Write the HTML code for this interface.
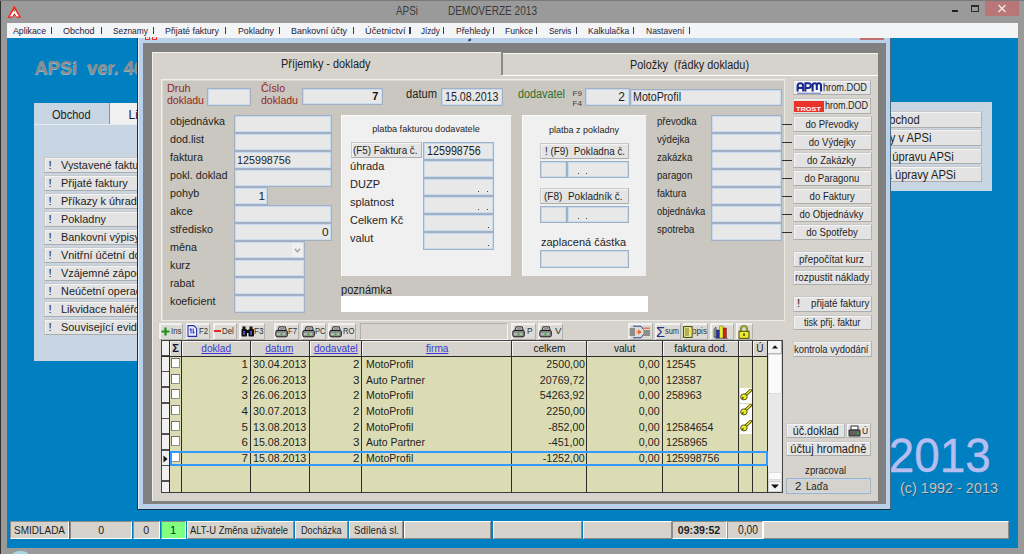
<!DOCTYPE html><html><head><meta charset="utf-8"><style>
*{margin:0;padding:0;box-sizing:border-box}
html,body{width:1024px;height:554px;overflow:hidden;background:#9a9a9a;font-family:"Liberation Sans",sans-serif;color:#1a1a1a}
.a{position:absolute}
.t{position:absolute;white-space:pre;line-height:1}
.inp{border:1px solid #a3b0c2;box-shadow:inset 1px 1px 0 #c4daf2, inset -1px -1px 0 #c8dcf2}
.btn{background:#e3e3e3;border:1px solid #c8c8c8;border-bottom-color:#acacac;border-right-color:#b2b2b2;box-shadow:inset 1px 1px 0 #f4f4f4}
</style></head><body><div class="a" style="left:0px;top:0px;width:1024px;height:554px;background:#9a9a9a"></div>
<div class="a" style="left:0px;top:0px;width:1px;height:554px;background:#303030"></div>
<div class="a" style="left:0px;top:0px;width:1024px;height:1px;background:#7a7a7a"></div>
<div class="a" style="left:7px;top:23px;width:1011px;height:15px;background:#f3f4f6"></div>
<div class="a" style="left:7px;top:38px;width:1011px;height:510px;background:#0080c0"></div>
<svg class="a" style="left:7.8px;top:5.6px" width="13" height="12" viewBox="0 0 13 12"><path d="M6.4 0.2 L12.7 11.4 H9 L6.4 8.8 L3.8 11.4 H0.1 Z" fill="#ff1414" stroke="#ff1414" stroke-width="0.5" stroke-linejoin="round"/><path d="M6.4 2.9 L11 10.5 H8.7 L6.4 7.2 L4.1 10.5 H1.8 Z" fill="#ffffff"/><circle cx="6.4" cy="4.6" r="0.9" fill="#6a8a20"/></svg>
<div class="t" style="left:396.00px;top:5.42px;font-size:12.5px;transform:scaleX(0.7916);transform-origin:left 50%;color:#3a3a3a;">APSi</div>
<div class="t" style="left:448.00px;top:5.42px;font-size:12.5px;transform:scaleX(0.8057);transform-origin:left 50%;color:#3a3a3a;">DEMOVERZE 2013</div>
<div class="a" style="left:952px;top:10px;width:6px;height:2px;background:#1e1e1e"></div>
<div class="a" style="left:971px;top:5px;width:8px;height:7px;border:1px solid #2a2a2a;border-top-width:2px"></div>
<div class="a" style="left:985px;top:1px;width:34px;height:15px;background:#b97676"></div>
<svg class="a" style="left:997px;top:4px" width="10" height="9" viewBox="0 0 10 9"><path d="M1.5 1 L8.5 8 M8.5 1 L1.5 8" stroke="#f2e6e6" stroke-width="1.4"/></svg>
<div class="t" style="left:12.50px;top:25.60px;font-size:9.8px;transform:scaleX(0.8936);transform-origin:left 50%;color:#24223a;">Aplikace</div>
<div class="a" style="left:50.95px;top:27px;width:1.2px;height:7px;background:#3c3a50"></div>
<div class="t" style="left:63.30px;top:25.60px;font-size:9.8px;transform:scaleX(0.9177);transform-origin:left 50%;color:#24223a;">Obchod</div>
<div class="a" style="left:100.5px;top:27px;width:1.2px;height:7px;background:#3c3a50"></div>
<div class="t" style="left:112.80px;top:25.60px;font-size:9.8px;transform:scaleX(0.8543);transform-origin:left 50%;color:#24223a;">Seznamy</div>
<div class="a" style="left:153.1px;top:27px;width:1.2px;height:7px;background:#3c3a50"></div>
<div class="t" style="left:165.20px;top:25.60px;font-size:9.8px;transform:scaleX(0.9013);transform-origin:left 50%;color:#24223a;">Přijaté faktury</div>
<div class="a" style="left:225.2px;top:27px;width:1.2px;height:7px;background:#3c3a50"></div>
<div class="t" style="left:237.50px;top:25.60px;font-size:9.8px;transform:scaleX(0.8905);transform-origin:left 50%;color:#24223a;">Pokladny</div>
<div class="a" style="left:279.09999999999997px;top:27px;width:1.2px;height:7px;background:#3c3a50"></div>
<div class="t" style="left:291.20px;top:25.60px;font-size:9.8px;transform:scaleX(0.9114);transform-origin:left 50%;color:#24223a;">Bankovní účty</div>
<div class="a" style="left:352.5px;top:27px;width:1.2px;height:7px;background:#3c3a50"></div>
<div class="t" style="left:364.50px;top:25.60px;font-size:9.8px;transform:scaleX(0.9413);transform-origin:left 50%;color:#24223a;">Účetnictví</div>
<div class="a" style="left:409.4px;top:27px;width:1.2px;height:7px;background:#3c3a50"></div>
<div class="t" style="left:421.40px;top:25.60px;font-size:9.8px;transform:scaleX(0.8219);transform-origin:left 50%;color:#24223a;">Jízdy</div>
<div class="a" style="left:443.0px;top:27px;width:1.2px;height:7px;background:#3c3a50"></div>
<div class="t" style="left:455.80px;top:25.60px;font-size:9.8px;transform:scaleX(0.8790);transform-origin:left 50%;color:#24223a;">Přehledy</div>
<div class="a" style="left:493.0px;top:27px;width:1.2px;height:7px;background:#3c3a50"></div>
<div class="t" style="left:505.00px;top:25.60px;font-size:9.8px;transform:scaleX(0.8744);transform-origin:left 50%;color:#24223a;">Funkce</div>
<div class="a" style="left:535.95px;top:27px;width:1.2px;height:7px;background:#3c3a50"></div>
<div class="t" style="left:548.60px;top:25.60px;font-size:9.8px;transform:scaleX(0.8153);transform-origin:left 50%;color:#24223a;">Servis</div>
<div class="a" style="left:576.1px;top:27px;width:1.2px;height:7px;background:#3c3a50"></div>
<div class="t" style="left:588.40px;top:25.60px;font-size:9.8px;transform:scaleX(0.8735);transform-origin:left 50%;color:#24223a;">Kalkulačka</div>
<div class="a" style="left:633.0px;top:27px;width:1.2px;height:7px;background:#3c3a50"></div>
<div class="t" style="left:645.50px;top:25.60px;font-size:9.8px;transform:scaleX(0.8669);transform-origin:left 50%;color:#24223a;">Nastavení</div>
<div class="a" style="left:688.9000000000001px;top:27px;width:1.2px;height:7px;background:#3c3a50"></div>
<div class="t" style="left:34.60px;top:59.36px;font-size:18px;transform:scaleX(1.0120);transform-origin:left 50%;color:#8c8c8c;font-weight:bold;text-shadow:-0.6px 0.6px 0 rgba(225,225,225,0.6)">APSi  ver. 40.13</div>
<div class="a" style="left:34px;top:124px;width:110px;height:237px;background:#c8d5e3"></div>
<div class="a" style="left:34px;top:103px;width:76px;height:21px;background:#c8d5e3"></div>
<div class="a" style="left:34px;top:124px;width:110px;height:1px;background:#e4ecf4"></div>
<div class="a" style="left:109px;top:103px;width:1px;height:21px;background:#8a9098"></div>
<div class="a" style="left:110px;top:103px;width:40px;height:21px;background:#f0f0f0"></div>
<div class="t" style="left:51.80px;top:109.14px;font-size:12px;transform:scaleX(0.9160);transform-origin:left 50%;color:#1e1e1e;">Obchod</div>
<div class="t" style="left:128.50px;top:109.14px;font-size:12px;color:#1e1e1e;">Likvidace</div>
<div class="a btn" style="left:44px;top:156.5px;width:110px;height:16px;"></div>
<div class="t" style="left:48.50px;top:159.97px;font-size:11.5px;color:#1e1e1e;">!</div>
<div class="t" style="left:61.00px;top:159.97px;font-size:11.5px;transform:scaleX(0.9500);transform-origin:left 50%;color:#1e1e1e;">Vystavené faktury</div>
<div class="a btn" style="left:44px;top:174.5px;width:110px;height:16px;"></div>
<div class="t" style="left:48.50px;top:177.97px;font-size:11.5px;color:#1e1e1e;">!</div>
<div class="t" style="left:61.00px;top:177.97px;font-size:11.5px;transform:scaleX(0.9500);transform-origin:left 50%;color:#1e1e1e;">Přijaté faktury</div>
<div class="a btn" style="left:44px;top:192.5px;width:110px;height:16px;"></div>
<div class="t" style="left:48.50px;top:195.97px;font-size:11.5px;color:#1e1e1e;">!</div>
<div class="t" style="left:61.00px;top:195.97px;font-size:11.5px;transform:scaleX(0.9500);transform-origin:left 50%;color:#1e1e1e;">Příkazy k úhradě</div>
<div class="a btn" style="left:44px;top:210.5px;width:110px;height:16px;"></div>
<div class="t" style="left:48.50px;top:213.97px;font-size:11.5px;color:#1e1e1e;">!</div>
<div class="t" style="left:61.00px;top:213.97px;font-size:11.5px;transform:scaleX(0.9500);transform-origin:left 50%;color:#1e1e1e;">Pokladny</div>
<div class="a btn" style="left:44px;top:228.5px;width:110px;height:16px;"></div>
<div class="t" style="left:48.50px;top:231.97px;font-size:11.5px;color:#1e1e1e;">!</div>
<div class="t" style="left:61.00px;top:231.97px;font-size:11.5px;transform:scaleX(0.9500);transform-origin:left 50%;color:#1e1e1e;">Bankovní výpisy</div>
<div class="a btn" style="left:44px;top:246.5px;width:110px;height:16px;"></div>
<div class="t" style="left:48.50px;top:249.97px;font-size:11.5px;color:#1e1e1e;">!</div>
<div class="t" style="left:61.00px;top:249.97px;font-size:11.5px;transform:scaleX(0.9500);transform-origin:left 50%;color:#1e1e1e;">Vnitřní účetní doklady</div>
<div class="a btn" style="left:44px;top:264.5px;width:110px;height:16px;"></div>
<div class="t" style="left:48.50px;top:267.97px;font-size:11.5px;color:#1e1e1e;">!</div>
<div class="t" style="left:61.00px;top:267.97px;font-size:11.5px;transform:scaleX(0.9500);transform-origin:left 50%;color:#1e1e1e;">Vzájemné zápočty</div>
<div class="a btn" style="left:44px;top:282.5px;width:110px;height:16px;"></div>
<div class="t" style="left:48.50px;top:285.97px;font-size:11.5px;color:#1e1e1e;">!</div>
<div class="t" style="left:61.00px;top:285.97px;font-size:11.5px;transform:scaleX(0.9500);transform-origin:left 50%;color:#1e1e1e;">Neúčetní operace</div>
<div class="a btn" style="left:44px;top:300.5px;width:110px;height:16px;"></div>
<div class="t" style="left:48.50px;top:303.97px;font-size:11.5px;color:#1e1e1e;">!</div>
<div class="t" style="left:61.00px;top:303.97px;font-size:11.5px;transform:scaleX(0.9500);transform-origin:left 50%;color:#1e1e1e;">Likvidace haléřových rozdílů</div>
<div class="a btn" style="left:44px;top:318.5px;width:110px;height:16px;"></div>
<div class="t" style="left:48.50px;top:321.97px;font-size:11.5px;color:#1e1e1e;">!</div>
<div class="t" style="left:61.00px;top:321.97px;font-size:11.5px;transform:scaleX(0.9500);transform-origin:left 50%;color:#1e1e1e;">Související evidence</div>
<div class="a" style="left:760px;top:102px;width:232px;height:88.5px;background:#c8d5e3"></div>
<div class="a btn" style="left:770px;top:111.0px;width:212px;height:16.5px;"></div>
<div class="t" style="left:823.27px;top:114.14px;font-size:12px;transform:scaleX(0.9300);transform-origin:right 50%;color:#1e1e1e;">Nastavení obchod</div>
<div class="a btn" style="left:770px;top:129.3px;width:212px;height:16.5px;"></div>
<div class="t" style="left:850.23px;top:132.44px;font-size:12px;transform:scaleX(0.9300);transform-origin:right 50%;color:#1e1e1e;">Novinky v APSi</div>
<div class="a btn" style="left:770px;top:147.6px;width:212px;height:16.5px;"></div>
<div class="t" style="left:808.94px;top:150.74px;font-size:12px;transform:scaleX(0.9300);transform-origin:right 50%;color:#1e1e1e;">Požadavky na úpravu APSi</div>
<div class="a btn" style="left:770px;top:165.9px;width:212px;height:16.5px;"></div>
<div class="t" style="left:821.05px;top:169.04px;font-size:12px;transform:scaleX(0.9300);transform-origin:right 50%;color:#1e1e1e;">Realizovaná úpravy APSi</div>
<div class="t" style="left:884.22px;top:431.87px;font-size:48px;transform:scaleX(0.9552);transform-origin:right 50%;color:#b6bdf0;-webkit-text-stroke:0.4px #b6bdf0">2013</div>
<div class="t" style="left:900.00px;top:480.73px;font-size:14.5px;transform:scaleX(0.9966);transform-origin:left 50%;color:#c4c4c4;text-shadow:1px 1px 0 rgba(40,60,80,0.6)">(c) 1992 - 2013</div>
<div class="a" style="left:12px;top:551px;width:17px;height:8px;background:#a8d4e4;border-radius:50%"></div>
<div class="a" style="left:10px;top:521px;width:59px;height:17.5px;background:#d6d2cc;border-top:1px solid #8c8c8c;border-left:1px solid #8c8c8c;border-bottom:1px solid #ffffff;border-right:1px solid #ffffff"></div>
<div class="t" style="left:14.00px;top:524.57px;font-size:11.5px;transform:scaleX(0.8674);transform-origin:left 50%;color:#1e1e1e;">SMIDLADA</div>
<div class="a" style="left:70px;top:521px;width:62px;height:17.5px;background:#d6d2cc;border-top:1px solid #8c8c8c;border-left:1px solid #8c8c8c;border-bottom:1px solid #ffffff;border-right:1px solid #ffffff"></div>
<div class="t" style="left:97.80px;top:524.57px;font-size:11.5px;transform:scaleX(0.9200);transform-origin:center 50%;color:#1e1e1e;">0</div>
<div class="a" style="left:133px;top:521px;width:27px;height:17.5px;background:#d6d2cc;border-top:1px solid #8c8c8c;border-left:1px solid #8c8c8c;border-bottom:1px solid #ffffff;border-right:1px solid #ffffff"></div>
<div class="t" style="left:143.30px;top:524.57px;font-size:11.5px;transform:scaleX(0.9200);transform-origin:center 50%;color:#1e1e1e;">0</div>
<div class="a" style="left:161px;top:521px;width:25px;height:17.5px;background:#80ff80;border-top:1px solid #8c8c8c;border-left:1px solid #8c8c8c;border-bottom:1px solid #ffffff;border-right:1px solid #ffffff"></div>
<div class="t" style="left:170.30px;top:524.57px;font-size:11.5px;transform:scaleX(0.9200);transform-origin:center 50%;color:#1e1e1e;">1</div>
<div class="a" style="left:187px;top:521px;width:107px;height:17.5px;background:#d6d2cc;border-top:1px solid #ffffff;border-left:1px solid #ffffff;border-bottom:1px solid #8c8c8c;border-right:1px solid #8c8c8c"></div>
<div class="t" style="left:189.50px;top:524.57px;font-size:11.5px;transform:scaleX(0.8214);transform-origin:left 50%;color:#1e1e1e;">ALT-U Změna uživatele</div>
<div class="a" style="left:295px;top:521px;width:53px;height:17.5px;background:#d6d2cc;border-top:1px solid #ffffff;border-left:1px solid #ffffff;border-bottom:1px solid #8c8c8c;border-right:1px solid #8c8c8c"></div>
<div class="t" style="left:301.00px;top:524.57px;font-size:11.5px;transform:scaleX(0.7920);transform-origin:left 50%;color:#1e1e1e;">Docházka</div>
<div class="a" style="left:349px;top:521px;width:54px;height:17.5px;background:#d6d2cc;border-top:1px solid #ffffff;border-left:1px solid #ffffff;border-bottom:1px solid #8c8c8c;border-right:1px solid #8c8c8c"></div>
<div class="t" style="left:354.00px;top:524.57px;font-size:11.5px;transform:scaleX(0.8380);transform-origin:left 50%;color:#1e1e1e;">Sdílená sl.</div>
<div class="a" style="left:404px;top:521px;width:87px;height:17.5px;background:#d6d2cc;border-top:1px solid #ffffff;border-left:1px solid #ffffff;border-bottom:1px solid #8c8c8c;border-right:1px solid #8c8c8c"></div>
<div class="a" style="left:493px;top:521px;width:89px;height:17.5px;background:#d6d2cc;border-top:1px solid #ffffff;border-left:1px solid #ffffff;border-bottom:1px solid #8c8c8c;border-right:1px solid #8c8c8c"></div>
<div class="a" style="left:583px;top:521px;width:89px;height:17.5px;background:#d6d2cc;border-top:1px solid #ffffff;border-left:1px solid #ffffff;border-bottom:1px solid #8c8c8c;border-right:1px solid #8c8c8c"></div>
<div class="a" style="left:672px;top:521px;width:55px;height:17.5px;background:#d6d2cc;border-top:1px solid #8c8c8c;border-left:1px solid #8c8c8c;border-bottom:1px solid #ffffff;border-right:1px solid #ffffff"></div>
<div class="t" style="left:676.48px;top:524.57px;font-size:11.5px;transform:scaleX(0.9200);transform-origin:center 50%;color:#1e1e1e;font-weight:bold;">09:39:52</div>
<div class="a" style="left:727px;top:521px;width:36px;height:17.5px;background:#d6d2cc;border-top:1px solid #8c8c8c;border-left:1px solid #8c8c8c;border-bottom:1px solid #ffffff;border-right:1px solid #ffffff"></div>
<div class="t" style="left:738.00px;top:524.14px;font-size:12px;transform:scaleX(0.8563);transform-origin:left 50%;color:#1e1e1e;">0,00</div>
<div class="a" style="left:763px;top:521px;width:246px;height:17.5px;background:#d6d2cc;border-top:1px solid #ffffff;border-left:1px solid #ffffff;border-bottom:1px solid #8c8c8c;border-right:1px solid #8c8c8c"></div>
<div class="a" style="left:137px;top:38px;width:754px;height:472px;background:#b9d1ea;border-left:1px solid #203040;border-bottom:1px solid #15303c;border-right:1px solid #4a6a80"></div>
<div class="a" style="left:138px;top:38px;width:1px;height:471px;background:#e6eef8"></div>
<div class="a" style="left:144.5px;top:37.3px;width:5.5px;height:2.8px;background:#f4d8d8;border:1.3px solid #e83434;border-top:none"></div>
<div class="a" style="left:151.5px;top:37.3px;width:5.5px;height:2.8px;background:#f4d8d8;border:1.3px solid #e83434;border-top:none"></div>
<div class="a" style="left:860px;top:38px;width:24px;height:2px;background:#c07070"></div>
<div class="a" style="left:467.5px;top:39px;width:3px;height:1.5px;background:#404860;transform:rotate(-35deg)"></div>
<div class="a" style="left:143px;top:43px;width:743px;height:460.8px;background:#808080"></div>
<div class="a" style="left:152px;top:52px;width:726px;height:448.5px;background:#d6d3cc;border-top:1px solid #f4f2ee;border-left:1px solid #f0eee8"></div>
<div class="a" style="left:502px;top:52px;width:376px;height:1px;background:#808080"></div>
<div class="a" style="left:502.5px;top:53px;width:375.5px;height:1px;background:#f6f5f2"></div>
<div class="a" style="left:501px;top:52px;width:1.5px;height:23px;background:#8a8a8a"></div>
<div class="a" style="left:502px;top:75px;width:376px;height:1px;background:#ffffff"></div>
<div class="a" style="left:152px;top:75.5px;width:350px;height:0.01px;"></div>
<div class="t" style="left:281.00px;top:57.84px;font-size:12px;transform:scaleX(0.9068);transform-origin:left 50%;color:#1e1e1e;">Příjemky - doklady</div>
<div class="t" style="left:630.00px;top:58.84px;font-size:12px;transform:scaleX(0.9057);transform-origin:left 50%;color:#1e1e1e;">Položky  (řádky dokladu)</div>
<div class="a" style="left:161px;top:79px;width:624px;height:242px;background:#c9c7bf;border-top:1px solid #f0eee8;border-left:1px solid #f0eee8;border-right:1px solid #eceae4;border-bottom:1px solid #eceae4;box-shadow:inset 1px 1px 0 #dcdad4"></div>
<div class="t" style="left:166.70px;top:82.69px;font-size:11px;transform:scaleX(0.9856);transform-origin:left 50%;color:#922626;">Druh</div>
<div class="t" style="left:166.70px;top:95.39px;font-size:11px;transform:scaleX(0.9602);transform-origin:left 50%;color:#922626;">dokladu</div>
<div class="a inp" style="left:207px;top:88px;width:44px;height:17.5px;background:#e8e8e8"></div>
<div class="t" style="left:261.00px;top:82.69px;font-size:11px;transform:scaleX(0.9576);transform-origin:left 50%;color:#922626;">Číslo</div>
<div class="t" style="left:261.00px;top:94.69px;font-size:11px;transform:scaleX(0.9602);transform-origin:left 50%;color:#922626;">dokladu</div>
<div class="a inp" style="left:302px;top:87.5px;width:80.5px;height:17px;background:#e8e8e8"></div>
<div class="t" style="left:372.18px;top:91.49px;font-size:11px;color:#101010;font-weight:bold;">7</div>
<div class="t" style="left:406.00px;top:88.09px;font-size:12px;transform:scaleX(0.9295);transform-origin:left 50%;color:#1e1e1e;">datum</div>
<div class="a inp" style="left:441px;top:88px;width:62px;height:17.5px;background:#e8e8e8"></div>
<div class="t" style="left:444.50px;top:91.09px;font-size:12px;transform:scaleX(0.8908);transform-origin:left 50%;color:#1e1e1e;">15.08.2013</div>
<div class="t" style="left:518.00px;top:88.09px;font-size:12px;transform:scaleX(0.9031);transform-origin:left 50%;color:#2f6e30;">dodavatel</div>
<div class="t" style="left:572.50px;top:89.53px;font-size:8px;color:#404040;">F9</div>
<div class="t" style="left:572.50px;top:100.03px;font-size:8px;color:#404040;">F4</div>
<div class="a inp" style="left:585px;top:88px;width:44.5px;height:17.5px;background:#e8e8e8"></div>
<div class="t" style="left:618.33px;top:90.84px;font-size:12px;color:#1e1e1e;">2</div>
<div class="a inp" style="left:630px;top:88.5px;width:152px;height:17px;background:#e8e8e8"></div>
<div class="t" style="left:633.00px;top:90.84px;font-size:12px;transform:scaleX(0.8886);transform-origin:left 50%;color:#1e1e1e;">MotoProfil</div>
<div class="a btn" style="left:792.5px;top:79.5px;width:78.5px;height:15.5px;"></div>
<div class="a" style="left:796px;top:81px;width:26px;height:13px;background:#fafafa"></div>
<svg class="a" style="left:796px;top:81.5px" width="26" height="12" viewBox="0 0 26 12"><g stroke="#1a2a8c" stroke-width="2.1" fill="none"><path d="M1.6 9.6V4.2Q1.6 1.2 4.4 1.2Q7.2 1.2 7.2 4.2V9.6M1.6 5.9H7.2"/><path d="M9.4 9.6V1.2H12.2Q14.9 1.2 14.9 3.6Q14.9 6 12.2 6H9.4"/><path d="M16.6 9.6V3.4Q16.6 1.2 18.7 1.2Q20.8 1.2 20.8 3.4V8M20.8 3.4Q20.8 1.2 22.9 1.2Q25 1.2 25 3.4V9.6"/></g><path d="M1 11.2H25" stroke="#4a5ab0" stroke-width="0.9"/></svg>
<div class="t" style="left:823.00px;top:82.44px;font-size:11px;transform:scaleX(0.8371);transform-origin:left 50%;color:#1e1e1e;">hrom.DOD</div>
<div class="a btn" style="left:792.5px;top:98px;width:78.5px;height:15.5px;"></div>
<div class="a" style="left:794px;top:101px;width:30px;height:11px;background:#e8322a"></div>
<div class="t" style="left:798.49px;top:105.65px;font-size:6.2px;transform:scaleX(1.1899);transform-origin:center 50%;color:#ffffff;font-weight:bold;">TROST</div>
<div class="t" style="left:825.00px;top:100.19px;font-size:11px;transform:scaleX(0.8181);transform-origin:left 50%;color:#1e1e1e;">hrom.DOD</div>
<div class="t" style="left:170.00px;top:116.07px;font-size:11.5px;transform:scaleX(0.9350);transform-origin:left 50%;color:#1e1e1e;">objednávka</div>
<div class="a inp" style="left:234px;top:115px;width:98px;height:18px;background:#e8e8e8"></div>
<div class="t" style="left:170.00px;top:134.07px;font-size:11.5px;transform:scaleX(0.9350);transform-origin:left 50%;color:#1e1e1e;">dod.list</div>
<div class="a inp" style="left:234px;top:133px;width:98px;height:18px;background:#e8e8e8"></div>
<div class="t" style="left:170.00px;top:152.07px;font-size:11.5px;transform:scaleX(0.9350);transform-origin:left 50%;color:#1e1e1e;">faktura</div>
<div class="a inp" style="left:234px;top:151px;width:98px;height:18px;background:#e8e8e8"></div>
<div class="t" style="left:170.00px;top:170.07px;font-size:11.5px;transform:scaleX(0.9350);transform-origin:left 50%;color:#1e1e1e;">pokl. doklad</div>
<div class="a inp" style="left:234px;top:169px;width:98px;height:18px;background:#e8e8e8"></div>
<div class="t" style="left:170.00px;top:188.07px;font-size:11.5px;transform:scaleX(0.9350);transform-origin:left 50%;color:#1e1e1e;">pohyb</div>
<div class="a inp" style="left:234px;top:187px;width:34px;height:18px;background:#e8e8e8"></div>
<div class="t" style="left:170.00px;top:206.07px;font-size:11.5px;transform:scaleX(0.9350);transform-origin:left 50%;color:#1e1e1e;">akce</div>
<div class="a inp" style="left:234px;top:205px;width:98px;height:18px;background:#e8e8e8"></div>
<div class="t" style="left:170.00px;top:224.07px;font-size:11.5px;transform:scaleX(0.9350);transform-origin:left 50%;color:#1e1e1e;">středisko</div>
<div class="a inp" style="left:234px;top:223px;width:98px;height:18px;background:#e8e8e8"></div>
<div class="t" style="left:170.00px;top:242.07px;font-size:11.5px;transform:scaleX(0.9350);transform-origin:left 50%;color:#1e1e1e;">měna</div>
<div class="a inp" style="left:234px;top:241px;width:70.5px;height:18px;background:#e8e8e8"></div>
<div class="t" style="left:170.00px;top:260.07px;font-size:11.5px;transform:scaleX(0.9350);transform-origin:left 50%;color:#1e1e1e;">kurz</div>
<div class="a inp" style="left:234px;top:259px;width:70.5px;height:18px;background:#e8e8e8"></div>
<div class="t" style="left:170.00px;top:278.07px;font-size:11.5px;transform:scaleX(0.9350);transform-origin:left 50%;color:#1e1e1e;">rabat</div>
<div class="a inp" style="left:234px;top:277px;width:70.5px;height:18px;background:#e8e8e8"></div>
<div class="t" style="left:170.00px;top:296.07px;font-size:11.5px;transform:scaleX(0.9350);transform-origin:left 50%;color:#1e1e1e;">koeficient</div>
<div class="a inp" style="left:234px;top:295px;width:70.5px;height:18px;background:#e8e8e8"></div>
<div class="t" style="left:237.30px;top:155.21px;font-size:11.8px;transform:scaleX(0.9100);transform-origin:left 50%;color:#1e1e1e;">125998756</div>
<div class="t" style="left:258.44px;top:191.21px;font-size:11.8px;color:#1e1e1e;">1</div>
<div class="t" style="left:321.94px;top:227.21px;font-size:11.8px;color:#1e1e1e;">0</div>
<div class="a" style="left:291.5px;top:242.5px;width:11.5px;height:14px;background:#f0f0f0"></div>
<svg class="a" style="left:293.8px;top:247.5px" width="7" height="5" viewBox="0 0 7 5"><path d="M0.8 0.8 L3.5 3.8 L6.2 0.8" stroke="#a8a8a8" fill="none" stroke-width="1.5"/></svg>
<div class="a" style="left:341px;top:114.5px;width:171px;height:162.5px;background:#f0f0f0;border-top:1px solid #fafafa;border-left:1px solid #fafafa;border-right:1px solid #c8c6c0;border-bottom:1px solid #c8c6c0"></div>
<div class="t" style="left:370.01px;top:123.96px;font-size:9.5px;transform:scaleX(0.9600);transform-origin:center 50%;color:#1e1e1e;">platba fakturou dodavatele</div>
<div class="a btn" style="left:351px;top:142px;width:71px;height:16px;background:#e4e4e4"></div>
<div class="t" style="left:353.00px;top:145.19px;font-size:11px;transform:scaleX(0.8943);transform-origin:left 50%;color:#1e1e1e;">(F5) Faktura č.</div>
<div class="a inp" style="left:423px;top:141.5px;width:71px;height:18px;background:#e8e8e8"></div>
<div class="a inp" style="left:423px;top:159.5px;width:71px;height:18px;background:#e8e8e8"></div>
<div class="a inp" style="left:423px;top:177.5px;width:71px;height:18px;background:#e8e8e8"></div>
<div class="a inp" style="left:423px;top:195.5px;width:71px;height:18px;background:#e8e8e8"></div>
<div class="a inp" style="left:423px;top:213.5px;width:71px;height:18px;background:#e8e8e8"></div>
<div class="a inp" style="left:423px;top:231.5px;width:71px;height:18px;background:#e8e8e8"></div>
<div class="t" style="left:427.00px;top:144.64px;font-size:12px;transform:scaleX(0.8948);transform-origin:left 50%;color:#1e1e1e;">125998756</div>
<div class="t" style="left:350.00px;top:160.97px;font-size:11.5px;transform:scaleX(0.9600);transform-origin:left 50%;color:#1e1e1e;">úhrada</div>
<div class="t" style="left:350.00px;top:178.97px;font-size:11.5px;transform:scaleX(0.9600);transform-origin:left 50%;color:#1e1e1e;">DUZP</div>
<div class="t" style="left:350.00px;top:196.97px;font-size:11.5px;transform:scaleX(0.9600);transform-origin:left 50%;color:#1e1e1e;">splatnost</div>
<div class="t" style="left:350.00px;top:214.97px;font-size:11.5px;transform:scaleX(0.9600);transform-origin:left 50%;color:#1e1e1e;">Celkem Kč</div>
<div class="t" style="left:350.00px;top:232.97px;font-size:11.5px;transform:scaleX(0.9600);transform-origin:left 50%;color:#1e1e1e;">valut</div>
<div class="a" style="left:478px;top:190.5px;width:1.2px;height:1.2px;background:#404040"></div>
<div class="a" style="left:487px;top:190.5px;width:1.2px;height:1.2px;background:#404040"></div>
<div class="a" style="left:478px;top:208.5px;width:1.2px;height:1.2px;background:#404040"></div>
<div class="a" style="left:487px;top:208.5px;width:1.2px;height:1.2px;background:#404040"></div>
<div class="a" style="left:488px;top:226.5px;width:1.2px;height:1.2px;background:#404040"></div>
<div class="a" style="left:488px;top:244.5px;width:1.2px;height:1.2px;background:#404040"></div>
<div class="a" style="left:522px;top:114.5px;width:125px;height:162.5px;background:#f0f0f0;border-top:1px solid #fafafa;border-left:1px solid #fafafa;border-right:1px solid #c8c6c0;border-bottom:1px solid #c8c6c0"></div>
<div class="t" style="left:547.03px;top:124.96px;font-size:9.5px;transform:scaleX(0.9467);transform-origin:center 50%;color:#1e1e1e;">platba z pokladny</div>
<div class="a btn" style="left:540px;top:143px;width:89px;height:15.5px;background:#e4e4e4"></div>
<div class="t" style="left:545.00px;top:145.69px;font-size:11px;transform:scaleX(0.8902);transform-origin:left 50%;color:#1e1e1e;">! (F9)  Pokladna č.</div>
<div class="a inp" style="left:540px;top:161px;width:26.5px;height:17px;background:#e8e8e8"></div>
<div class="a inp" style="left:567px;top:161px;width:62px;height:17px;background:#e8e8e8"></div>
<div class="a" style="left:578px;top:173px;width:1.2px;height:1.2px;background:#404040"></div>
<div class="a" style="left:586px;top:173px;width:1.2px;height:1.2px;background:#404040"></div>
<div class="a btn" style="left:540px;top:188px;width:89px;height:16px;background:#e4e4e4"></div>
<div class="t" style="left:544.00px;top:190.69px;font-size:11px;transform:scaleX(0.9107);transform-origin:left 50%;color:#1e1e1e;">(F8)  Pokladník č.</div>
<div class="a inp" style="left:540px;top:206px;width:26.5px;height:17px;background:#e8e8e8"></div>
<div class="a inp" style="left:567px;top:206px;width:62px;height:17px;background:#e8e8e8"></div>
<div class="a" style="left:578px;top:218px;width:1.2px;height:1.2px;background:#404040"></div>
<div class="a" style="left:586px;top:218px;width:1.2px;height:1.2px;background:#404040"></div>
<div class="t" style="left:541.00px;top:236.57px;font-size:11.5px;transform:scaleX(0.9565);transform-origin:left 50%;color:#1e1e1e;">zaplacená částka</div>
<div class="a inp" style="left:539.5px;top:250px;width:89.5px;height:17.5px;background:#e8e8e8"></div>
<div class="t" style="left:657.00px;top:115.61px;font-size:10.5px;transform:scaleX(0.9150);transform-origin:left 50%;color:#1e1e1e;">převodka</div>
<div class="a inp" style="left:711px;top:115px;width:71px;height:18px;background:#e8e8e8"></div>
<div class="a" style="left:782px;top:123.5px;width:10px;height:1px;background:#303030"></div>
<div class="a btn" style="left:792.5px;top:116px;width:79px;height:16px;"></div>
<div class="t" style="left:799.79px;top:119.07px;font-size:11.5px;transform:scaleX(0.8300);transform-origin:center 50%;color:#1e1e1e;">do Převodky</div>
<div class="t" style="left:657.00px;top:133.61px;font-size:10.5px;transform:scaleX(0.9150);transform-origin:left 50%;color:#1e1e1e;">výdejka</div>
<div class="a inp" style="left:711px;top:133px;width:71px;height:18px;background:#e8e8e8"></div>
<div class="a" style="left:782px;top:141.5px;width:10px;height:1px;background:#303030"></div>
<div class="a btn" style="left:792.5px;top:134px;width:79px;height:16px;"></div>
<div class="t" style="left:803.62px;top:137.07px;font-size:11.5px;transform:scaleX(0.8300);transform-origin:center 50%;color:#1e1e1e;">do Výdejky</div>
<div class="t" style="left:657.00px;top:151.61px;font-size:10.5px;transform:scaleX(0.9150);transform-origin:left 50%;color:#1e1e1e;">zakázka</div>
<div class="a inp" style="left:711px;top:151px;width:71px;height:18px;background:#e8e8e8"></div>
<div class="a" style="left:782px;top:159.5px;width:10px;height:1px;background:#303030"></div>
<div class="a btn" style="left:792.5px;top:152px;width:79px;height:16px;"></div>
<div class="t" style="left:802.35px;top:155.07px;font-size:11.5px;transform:scaleX(0.8300);transform-origin:center 50%;color:#1e1e1e;">do Zakázky</div>
<div class="t" style="left:657.00px;top:169.61px;font-size:10.5px;transform:scaleX(0.9150);transform-origin:left 50%;color:#1e1e1e;">paragon</div>
<div class="a inp" style="left:711px;top:169px;width:71px;height:18px;background:#e8e8e8"></div>
<div class="a" style="left:782px;top:177.5px;width:10px;height:1px;background:#303030"></div>
<div class="a btn" style="left:792.5px;top:170px;width:79px;height:16px;"></div>
<div class="t" style="left:798.82px;top:173.07px;font-size:11.5px;transform:scaleX(0.8300);transform-origin:center 50%;color:#1e1e1e;">do Paragonu</div>
<div class="t" style="left:657.00px;top:187.61px;font-size:10.5px;transform:scaleX(0.9150);transform-origin:left 50%;color:#1e1e1e;">faktura</div>
<div class="a inp" style="left:711px;top:187px;width:71px;height:18px;background:#e8e8e8"></div>
<div class="a" style="left:782px;top:195.5px;width:10px;height:1px;background:#303030"></div>
<div class="a btn" style="left:792.5px;top:188px;width:79px;height:16px;"></div>
<div class="t" style="left:804.59px;top:191.07px;font-size:11.5px;transform:scaleX(0.8300);transform-origin:center 50%;color:#1e1e1e;">do Faktury</div>
<div class="t" style="left:657.00px;top:205.61px;font-size:10.5px;transform:scaleX(0.8983);transform-origin:left 50%;color:#1e1e1e;">objednávka</div>
<div class="a inp" style="left:711px;top:205px;width:71px;height:18px;background:#e8e8e8"></div>
<div class="a" style="left:782px;top:213.5px;width:10px;height:1px;background:#303030"></div>
<div class="a btn" style="left:792.5px;top:206px;width:79px;height:16px;"></div>
<div class="t" style="left:793.39px;top:209.07px;font-size:11.5px;transform:scaleX(0.8300);transform-origin:center 50%;color:#1e1e1e;">do Objednávky</div>
<div class="t" style="left:657.00px;top:223.61px;font-size:10.5px;transform:scaleX(0.9150);transform-origin:left 50%;color:#1e1e1e;">spotreba</div>
<div class="a inp" style="left:711px;top:223px;width:71px;height:18px;background:#e8e8e8"></div>
<div class="a" style="left:782px;top:231.5px;width:10px;height:1px;background:#303030"></div>
<div class="a btn" style="left:792.5px;top:224px;width:79px;height:16px;"></div>
<div class="t" style="left:800.74px;top:227.07px;font-size:11.5px;transform:scaleX(0.8300);transform-origin:center 50%;color:#1e1e1e;">do Spotřeby</div>
<div class="t" style="left:341.00px;top:283.64px;font-size:12px;transform:scaleX(0.9211);transform-origin:left 50%;color:#1e1e1e;">poznámka</div>
<div class="a" style="left:341px;top:296px;width:306.5px;height:16px;background:#ffffff"></div>
<div class="a btn" style="left:792.5px;top:251px;width:79px;height:15.5px;"></div>
<div class="t" style="left:799.25px;top:253.57px;font-size:11.5px;transform:scaleX(0.8545);transform-origin:left 50%;color:#1e1e1e;">přepočítat kurz</div>
<div class="a btn" style="left:792.5px;top:269.5px;width:79px;height:15.5px;"></div>
<div class="t" style="left:794.50px;top:272.07px;font-size:11.5px;transform:scaleX(0.8604);transform-origin:left 50%;color:#1e1e1e;">rozpustit náklady</div>
<div class="a btn" style="left:792.5px;top:296px;width:79px;height:15.5px;"></div>
<div class="a btn" style="left:792.5px;top:314.5px;width:79px;height:15.5px;"></div>
<div class="t" style="left:803.75px;top:317.07px;font-size:11.5px;transform:scaleX(0.7930);transform-origin:left 50%;color:#1e1e1e;">tisk přij. faktur</div>
<div class="a btn" style="left:792.5px;top:341px;width:79px;height:16px;"></div>
<div class="t" style="left:794.25px;top:343.57px;font-size:11.5px;transform:scaleX(0.8206);transform-origin:left 50%;color:#1e1e1e;">kontrola vydodání</div>
<div class="t" style="left:797.00px;top:298.27px;font-size:11.5px;color:#1e1e1e;">!</div>
<div class="t" style="left:811.25px;top:298.27px;font-size:11.5px;transform:scaleX(0.8438);transform-origin:left 50%;color:#1e1e1e;">přijaté faktury</div>
<div class="a btn" style="left:159px;top:323px;width:24px;height:17px;background:#dcdad4;border-color:#f0f0f0 #b0b0b0 #b0b0b0 #f0f0f0"></div>
<div class="a btn" style="left:185.5px;top:323px;width:24.5px;height:17px;background:#dcdad4;border-color:#f0f0f0 #b0b0b0 #b0b0b0 #f0f0f0"></div>
<div class="a btn" style="left:212.5px;top:323px;width:24.5px;height:17px;background:#dcdad4;border-color:#f0f0f0 #b0b0b0 #b0b0b0 #f0f0f0"></div>
<div class="a btn" style="left:239px;top:323px;width:25.5px;height:17px;background:#dcdad4;border-color:#f0f0f0 #b0b0b0 #b0b0b0 #f0f0f0"></div>
<div class="a btn" style="left:274px;top:323px;width:25px;height:17px;background:#dcdad4;border-color:#f0f0f0 #b0b0b0 #b0b0b0 #f0f0f0"></div>
<div class="a btn" style="left:301px;top:323px;width:25px;height:17px;background:#dcdad4;border-color:#f0f0f0 #b0b0b0 #b0b0b0 #f0f0f0"></div>
<div class="a btn" style="left:328px;top:323px;width:28px;height:17px;background:#dcdad4;border-color:#f0f0f0 #b0b0b0 #b0b0b0 #f0f0f0"></div>
<div class="a btn" style="left:511px;top:323px;width:24.5px;height:17px;background:#dcdad4;border-color:#f0f0f0 #b0b0b0 #b0b0b0 #f0f0f0"></div>
<div class="a btn" style="left:538px;top:323px;width:25px;height:17px;background:#dcdad4;border-color:#f0f0f0 #b0b0b0 #b0b0b0 #f0f0f0"></div>
<div class="a btn" style="left:628px;top:323px;width:25px;height:17px;background:#dcdad4;border-color:#f0f0f0 #b0b0b0 #b0b0b0 #f0f0f0"></div>
<div class="a btn" style="left:655px;top:323px;width:25.5px;height:17px;background:#dcdad4;border-color:#f0f0f0 #b0b0b0 #b0b0b0 #f0f0f0"></div>
<div class="a btn" style="left:682.5px;top:323px;width:25.0px;height:17px;background:#dcdad4;border-color:#f0f0f0 #b0b0b0 #b0b0b0 #f0f0f0"></div>
<div class="a btn" style="left:709.5px;top:323px;width:24.5px;height:17px;background:#dcdad4;border-color:#f0f0f0 #b0b0b0 #b0b0b0 #f0f0f0"></div>
<div class="a btn" style="left:736px;top:323px;width:16.5px;height:17px;background:#dcdad4;border-color:#f0f0f0 #b0b0b0 #b0b0b0 #f0f0f0"></div>
<div class="a" style="left:359.5px;top:323px;width:148.5px;height:17px;background:#d6d3cc;border:1px solid;border-color:#b0b0b0 #f4f4f4 #f4f4f4 #b0b0b0"></div>
<svg class="a" style="left:161px;top:327px" width="9" height="9" viewBox="0 0 9 9"><path d="M0.5 4.5H8.5M4.5 0.5V8.5" stroke="#1f8f1f" stroke-width="2.2"/></svg>
<div class="t" style="left:170.50px;top:327.02px;font-size:8.6px;transform:scaleX(0.9153);transform-origin:left 50%;color:#303030;">Ins</div>
<svg class="a" style="left:187px;top:325px" width="11" height="12" viewBox="0 0 11 12"><path d="M1 0.6H6.8L9.6 3.4V11.4H1Z" fill="#eef0ff" stroke="#2830a8" stroke-width="1.1"/><path d="M4 3.5V8.5M4 3.5L2.8 4.8M6.2 3.5V8.5M6.2 8.5L7.4 7.2" stroke="#2830a8" stroke-width="1.1" fill="none"/></svg>
<div class="t" style="left:199.00px;top:326.88px;font-size:9px;transform:scaleX(0.8569);transform-origin:left 50%;color:#303030;">F2</div>
<div class="a" style="left:214px;top:330.2px;width:7px;height:2px;background:#e02828"></div>
<div class="t" style="left:222.30px;top:327.05px;font-size:8.8px;transform:scaleX(0.8860);transform-origin:left 50%;color:#303030;">Del</div>
<svg class="a" style="left:240.5px;top:325.5px" width="14" height="11" viewBox="0 0 14 11"><rect x="1.5" y="0.5" width="3" height="3" fill="#101010"/><rect x="8.5" y="0.5" width="3" height="3" fill="#101010"/><rect x="0.5" y="3" width="5.5" height="7.5" rx="1" fill="#101010"/><rect x="7.5" y="3" width="5.5" height="7.5" rx="1" fill="#101010"/><rect x="5.5" y="4" width="3" height="3" fill="#101010"/><rect x="2.3" y="5" width="1.6" height="4" fill="#5a5ad8"/><rect x="9.3" y="5" width="1.6" height="4" fill="#5a5ad8"/></svg>
<div class="t" style="left:254.00px;top:326.88px;font-size:9px;transform:scaleX(0.9045);transform-origin:left 50%;color:#303030;">F3</div>
<svg class="a" style="left:275px;top:325.5px" width="13" height="12" viewBox="0 0 13 12"><path d="M4 0.8H10.3L11.2 4.2H3Z" fill="#d4d4d4" stroke="#303030" stroke-width="1"/><path d="M4.8 2.2H9.5" stroke="#707070"/><path d="M1.8 4.5H11.3Q12.3 4.5 12.3 6V9.3Q12.3 10.8 10.8 10.8H2.3Q0.8 10.8 0.8 9.3V6.2Q0.8 4.5 1.8 4.5Z" fill="#8c8c8c" stroke="#1a1a1a" stroke-width="1"/><rect x="1.8" y="7" width="8.5" height="2.2" fill="#b8b8b8"/><rect x="5.5" y="7.3" width="2" height="1.8" fill="#10c010"/></svg>
<div class="t" style="left:288.00px;top:327.05px;font-size:8.8px;transform:scaleX(0.8763);transform-origin:left 50%;color:#303030;">F7</div>
<svg class="a" style="left:302px;top:325.5px" width="13" height="12" viewBox="0 0 13 12"><path d="M4 0.8H10.3L11.2 4.2H3Z" fill="#d4d4d4" stroke="#303030" stroke-width="1"/><path d="M4.8 2.2H9.5" stroke="#707070"/><path d="M1.8 4.5H11.3Q12.3 4.5 12.3 6V9.3Q12.3 10.8 10.8 10.8H2.3Q0.8 10.8 0.8 9.3V6.2Q0.8 4.5 1.8 4.5Z" fill="#8c8c8c" stroke="#1a1a1a" stroke-width="1"/><rect x="1.8" y="7" width="8.5" height="2.2" fill="#b8b8b8"/><rect x="5.5" y="7.3" width="2" height="1.8" fill="#10c010"/></svg>
<div class="t" style="left:315.00px;top:327.05px;font-size:8.8px;transform:scaleX(0.8589);transform-origin:left 50%;color:#303030;">PC</div>
<svg class="a" style="left:329px;top:325.5px" width="13" height="12" viewBox="0 0 13 12"><path d="M4 0.8H10.3L11.2 4.2H3Z" fill="#d4d4d4" stroke="#303030" stroke-width="1"/><path d="M4.8 2.2H9.5" stroke="#707070"/><path d="M1.8 4.5H11.3Q12.3 4.5 12.3 6V9.3Q12.3 10.8 10.8 10.8H2.3Q0.8 10.8 0.8 9.3V6.2Q0.8 4.5 1.8 4.5Z" fill="#8c8c8c" stroke="#1a1a1a" stroke-width="1"/><rect x="1.8" y="7" width="8.5" height="2.2" fill="#b8b8b8"/><rect x="5.5" y="7.3" width="2" height="1.8" fill="#10c010"/></svg>
<div class="t" style="left:342.50px;top:327.05px;font-size:8.8px;transform:scaleX(0.8712);transform-origin:left 50%;color:#303030;">RO</div>
<svg class="a" style="left:512px;top:325.5px" width="13" height="12" viewBox="0 0 13 12"><path d="M4 0.8H10.3L11.2 4.2H3Z" fill="#d4d4d4" stroke="#303030" stroke-width="1"/><path d="M4.8 2.2H9.5" stroke="#707070"/><path d="M1.8 4.5H11.3Q12.3 4.5 12.3 6V9.3Q12.3 10.8 10.8 10.8H2.3Q0.8 10.8 0.8 9.3V6.2Q0.8 4.5 1.8 4.5Z" fill="#8c8c8c" stroke="#1a1a1a" stroke-width="1"/><rect x="1.8" y="7" width="8.5" height="2.2" fill="#b8b8b8"/><rect x="5.5" y="7.3" width="2" height="1.8" fill="#10c010"/></svg>
<div class="t" style="left:527.00px;top:327.05px;font-size:8.8px;transform:scaleX(0.9370);transform-origin:left 50%;color:#303030;">P</div>
<svg class="a" style="left:539px;top:325.5px" width="13" height="12" viewBox="0 0 13 12"><path d="M4 0.8H10.3L11.2 4.2H3Z" fill="#d4d4d4" stroke="#303030" stroke-width="1"/><path d="M4.8 2.2H9.5" stroke="#707070"/><path d="M1.8 4.5H11.3Q12.3 4.5 12.3 6V9.3Q12.3 10.8 10.8 10.8H2.3Q0.8 10.8 0.8 9.3V6.2Q0.8 4.5 1.8 4.5Z" fill="#8c8c8c" stroke="#1a1a1a" stroke-width="1"/><rect x="1.8" y="7" width="8.5" height="2.2" fill="#b8b8b8"/><rect x="5.5" y="7.3" width="2" height="1.8" fill="#10c010"/></svg>
<div class="t" style="left:554.50px;top:327.05px;font-size:8.8px;transform:scaleX(1.1073);transform-origin:left 50%;color:#303030;">V</div>
<svg class="a" style="left:628.5px;top:324.5px" width="22" height="14" viewBox="0 0 22 14"><path d="M0.5 4H6M0.5 6H6M0.5 8H6M0.5 10H6" stroke="#404040" stroke-width="1.2"/><path d="M4 1.2H12L14.5 4.5M4 12.8H12L14.5 9.5" stroke="#3040a0" stroke-width="1" fill="none"/><path d="M7.5 7H10M9.5 5L12 7L9.5 9Z" fill="#f06838" stroke="#f06838"/><path d="M14.5 3.2H21" stroke="#f07040" stroke-width="1.4"/><path d="M14.5 6H21M14.5 8H21M14.5 10H21" stroke="#404040" stroke-width="1.2"/></svg>
<div class="t" style="left:655.50px;top:325.15px;font-size:14px;transform:scaleX(1.0399);transform-origin:left 50%;color:#28308a;">Σ</div>
<div class="t" style="left:665.00px;top:327.18px;font-size:9px;transform:scaleX(0.8234);transform-origin:left 50%;color:#303030;">sum</div>
<svg class="a" style="left:683px;top:325.5px" width="10" height="12" viewBox="0 0 10 12"><rect x="0.6" y="0.6" width="8.5" height="10.8" fill="#f0f080" stroke="#404020" stroke-width="1"/><path d="M2 3H6M2 5H6M2 7H6M2 9H6" stroke="#606030" stroke-width="0.9"/><rect x="6.5" y="4" width="3" height="3" fill="#e8d820"/></svg>
<div class="t" style="left:691.50px;top:327.18px;font-size:9px;transform:scaleX(0.9085);transform-origin:left 50%;color:#303030;">opis</div>
<svg class="a" style="left:713px;top:324.5px" width="17" height="14" viewBox="0 0 17 14"><path d="M0.5 12.5L3 13.5H15.5L13 12.5Z" fill="#505050"/><path d="M1 12V4L3 2V12Z" fill="#a0b0a0" stroke="#303030" stroke-width="0.6"/><rect x="3.5" y="5" width="3" height="8" fill="#2030b0" stroke="#202040" stroke-width="0.5"/><rect x="6.8" y="1" width="3.2" height="12" fill="#f0f030" stroke="#606020" stroke-width="0.5"/><rect x="10.3" y="3" width="3" height="10" fill="#d02020" stroke="#601010" stroke-width="0.5"/></svg>
<svg class="a" style="left:737.5px;top:324.5px" width="12" height="14" viewBox="0 0 12 14"><path d="M3 6.5V4.2A3 3 0 0 1 9 4.2V6.5" stroke="#4a4a00" stroke-width="1.8" fill="none"/><path d="M3 6.5V4.2A3 3 0 0 1 9 4.2V6.5" stroke="#e8e840" stroke-width="0.8" fill="none"/><rect x="1" y="6.3" width="10" height="7" fill="#eaea30" stroke="#4a4a00" stroke-width="1"/><rect x="5.3" y="8.5" width="1.4" height="2.5" fill="#303000"/></svg>
<div class="a" style="left:161px;top:340px;width:621.5px;height:152.5px;background:#dcdcb4;border:1px solid #404040"></div>
<div class="a" style="left:162px;top:341px;width:7.5px;height:151px;background:#f0f0f0"></div>
<div class="a" style="left:169.5px;top:341px;width:598px;height:15.5px;background:#d6d3cc"></div>
<div class="a" style="left:170px;top:341px;width:1px;height:14.8px;background:#f6f5f2"></div>
<div class="a" style="left:182px;top:341px;width:1px;height:14.8px;background:#f6f5f2"></div>
<div class="a" style="left:251px;top:341px;width:1px;height:14.8px;background:#f6f5f2"></div>
<div class="a" style="left:310px;top:341px;width:1px;height:14.8px;background:#f6f5f2"></div>
<div class="a" style="left:362px;top:341px;width:1px;height:14.8px;background:#f6f5f2"></div>
<div class="a" style="left:512px;top:341px;width:1px;height:14.8px;background:#f6f5f2"></div>
<div class="a" style="left:587px;top:341px;width:1px;height:14.8px;background:#f6f5f2"></div>
<div class="a" style="left:663px;top:341px;width:1px;height:14.8px;background:#f6f5f2"></div>
<div class="a" style="left:739px;top:341px;width:1px;height:14.8px;background:#f6f5f2"></div>
<div class="a" style="left:753px;top:341px;width:1px;height:14.8px;background:#f6f5f2"></div>
<div class="a" style="left:170px;top:341px;width:597px;height:1px;background:#f6f5f2"></div>
<div class="a" style="left:162px;top:355.0px;width:7.5px;height:1.5px;background:#505050"></div>
<div class="a" style="left:162px;top:370.67px;width:7.5px;height:1.5px;background:#505050"></div>
<div class="a" style="left:162px;top:386.34px;width:7.5px;height:1.5px;background:#505050"></div>
<div class="a" style="left:162px;top:402.01px;width:7.5px;height:1.5px;background:#505050"></div>
<div class="a" style="left:162px;top:417.68px;width:7.5px;height:1.5px;background:#505050"></div>
<div class="a" style="left:162px;top:433.35px;width:7.5px;height:1.5px;background:#505050"></div>
<div class="a" style="left:162px;top:449.02px;width:7.5px;height:1.5px;background:#505050"></div>
<div class="a" style="left:162px;top:464.69px;width:7.5px;height:1.5px;background:#505050"></div>
<div class="a" style="left:162px;top:480.36px;width:7.5px;height:1.5px;background:#505050"></div>
<div class="a" style="left:169px;top:341px;width:1px;height:151.5px;background:#2c2c2c"></div>
<div class="a" style="left:181px;top:341px;width:1px;height:151.5px;background:#2c2c2c"></div>
<div class="a" style="left:250px;top:341px;width:1px;height:151.5px;background:#2c2c2c"></div>
<div class="a" style="left:309px;top:341px;width:1px;height:151.5px;background:#2c2c2c"></div>
<div class="a" style="left:361px;top:341px;width:1px;height:151.5px;background:#2c2c2c"></div>
<div class="a" style="left:511px;top:341px;width:1px;height:151.5px;background:#2c2c2c"></div>
<div class="a" style="left:586px;top:341px;width:1px;height:151.5px;background:#2c2c2c"></div>
<div class="a" style="left:662px;top:341px;width:1px;height:151.5px;background:#2c2c2c"></div>
<div class="a" style="left:738px;top:341px;width:1px;height:151.5px;background:#2c2c2c"></div>
<div class="a" style="left:752px;top:341px;width:1px;height:151.5px;background:#2c2c2c"></div>
<div class="a" style="left:767px;top:341px;width:1px;height:151.5px;background:#2c2c2c"></div>
<div class="a" style="left:162px;top:355.8px;width:605px;height:1px;background:#2c2c2c"></div>
<div class="t" style="left:172.20px;top:342.69px;font-size:11px;color:#101030;font-weight:bold;">Σ</div>
<div class="t" style="left:199.54px;top:342.99px;font-size:11px;transform:scaleX(0.9200);transform-origin:center 50%;color:#3b3bd0;text-decoration:underline">doklad</div>
<div class="t" style="left:264.46px;top:342.99px;font-size:11px;transform:scaleX(0.9200);transform-origin:center 50%;color:#3b3bd0;text-decoration:underline">datum</div>
<div class="t" style="left:311.90px;top:342.99px;font-size:11px;transform:scaleX(0.9200);transform-origin:center 50%;color:#3b3bd0;text-decoration:underline">dodavatel</div>
<div class="t" style="left:424.78px;top:342.99px;font-size:11px;transform:scaleX(0.9200);transform-origin:center 50%;color:#3b3bd0;text-decoration:underline">firma</div>
<div class="t" style="left:532.08px;top:342.99px;font-size:11px;transform:scaleX(0.9200);transform-origin:center 50%;color:#202020;">celkem</div>
<div class="t" style="left:613.13px;top:342.99px;font-size:11px;transform:scaleX(0.9200);transform-origin:center 50%;color:#202020;">valut</div>
<div class="t" style="left:671.70px;top:342.99px;font-size:11px;transform:scaleX(0.9200);transform-origin:center 50%;color:#202020;">faktura dod.</div>
<div class="t" style="left:755.78px;top:342.99px;font-size:11px;transform:scaleX(0.9200);transform-origin:center 50%;color:#202020;">Ú</div>
<div class="a" style="left:171px;top:358.0px;width:8.5px;height:10px;background:#ffffff;border:1px solid #909090;border-top-color:#707070;border-left-color:#707070"></div>
<div class="t" style="left:241.55px;top:357.88px;font-size:11.6px;color:#1e1e1e;">1</div>
<div class="t" style="left:253.00px;top:357.88px;font-size:11.6px;transform:scaleX(0.9180);transform-origin:left 50%;color:#1e1e1e;">30.04.2013</div>
<div class="t" style="left:353.05px;top:357.88px;font-size:11.6px;color:#1e1e1e;">2</div>
<div class="t" style="left:365.75px;top:357.88px;font-size:11.6px;transform:scaleX(0.9050);transform-origin:left 50%;color:#1e1e1e;">MotoProfil</div>
<div class="t" style="left:542.57px;top:357.88px;font-size:11.6px;transform:scaleX(0.9200);transform-origin:right 50%;color:#1e1e1e;">2500,00</div>
<div class="t" style="left:637.42px;top:357.88px;font-size:11.6px;transform:scaleX(0.9200);transform-origin:right 50%;color:#1e1e1e;">0,00</div>
<div class="t" style="left:666.25px;top:357.88px;font-size:11.6px;transform:scaleX(0.9200);transform-origin:left 50%;color:#1e1e1e;">12545</div>
<div class="a" style="left:171px;top:373.67px;width:8.5px;height:10px;background:#ffffff;border:1px solid #909090;border-top-color:#707070;border-left-color:#707070"></div>
<div class="t" style="left:241.55px;top:373.55px;font-size:11.6px;color:#1e1e1e;">2</div>
<div class="t" style="left:253.00px;top:373.55px;font-size:11.6px;transform:scaleX(0.9180);transform-origin:left 50%;color:#1e1e1e;">26.06.2013</div>
<div class="t" style="left:353.05px;top:373.55px;font-size:11.6px;color:#1e1e1e;">3</div>
<div class="t" style="left:365.75px;top:373.55px;font-size:11.6px;transform:scaleX(0.9050);transform-origin:left 50%;color:#1e1e1e;">Auto Partner</div>
<div class="t" style="left:536.12px;top:373.55px;font-size:11.6px;transform:scaleX(0.9200);transform-origin:right 50%;color:#1e1e1e;">20769,72</div>
<div class="t" style="left:637.42px;top:373.55px;font-size:11.6px;transform:scaleX(0.9200);transform-origin:right 50%;color:#1e1e1e;">0,00</div>
<div class="t" style="left:666.25px;top:373.55px;font-size:11.6px;transform:scaleX(0.9200);transform-origin:left 50%;color:#1e1e1e;">123587</div>
<div class="a" style="left:171px;top:389.34px;width:8.5px;height:10px;background:#ffffff;border:1px solid #909090;border-top-color:#707070;border-left-color:#707070"></div>
<div class="t" style="left:241.55px;top:389.22px;font-size:11.6px;color:#1e1e1e;">3</div>
<div class="t" style="left:253.00px;top:389.22px;font-size:11.6px;transform:scaleX(0.9180);transform-origin:left 50%;color:#1e1e1e;">26.06.2013</div>
<div class="t" style="left:353.05px;top:389.22px;font-size:11.6px;color:#1e1e1e;">2</div>
<div class="t" style="left:365.75px;top:389.22px;font-size:11.6px;transform:scaleX(0.9050);transform-origin:left 50%;color:#1e1e1e;">MotoProfil</div>
<div class="t" style="left:536.12px;top:389.22px;font-size:11.6px;transform:scaleX(0.9200);transform-origin:right 50%;color:#1e1e1e;">54263,92</div>
<div class="t" style="left:637.42px;top:389.22px;font-size:11.6px;transform:scaleX(0.9200);transform-origin:right 50%;color:#1e1e1e;">0,00</div>
<div class="t" style="left:666.25px;top:389.22px;font-size:11.6px;transform:scaleX(0.9200);transform-origin:left 50%;color:#1e1e1e;">258963</div>
<div class="a" style="left:740.2px;top:387.84px;width:12.3px;height:15px;background:#ffffff"></div>
<svg class="a" style="left:740px;top:388.64px" width="12" height="12" viewBox="0 0 12 12"><path d="M5.5 6.2L10.6 1.3" stroke="#4a4a00" stroke-width="3" stroke-linecap="round"/><path d="M5.5 6.2L10.6 1.3" stroke="#ecec30" stroke-width="1.4" stroke-linecap="round"/><ellipse cx="3.9" cy="7.9" rx="3.3" ry="3" fill="#ecec30" stroke="#4a4a00" stroke-width="0.9"/><circle cx="2.8" cy="8.8" r="0.9" fill="#303000"/></svg>
<div class="a" style="left:171px;top:405.01px;width:8.5px;height:10px;background:#ffffff;border:1px solid #909090;border-top-color:#707070;border-left-color:#707070"></div>
<div class="t" style="left:241.55px;top:404.89px;font-size:11.6px;color:#1e1e1e;">4</div>
<div class="t" style="left:253.00px;top:404.89px;font-size:11.6px;transform:scaleX(0.9180);transform-origin:left 50%;color:#1e1e1e;">30.07.2013</div>
<div class="t" style="left:353.05px;top:404.89px;font-size:11.6px;color:#1e1e1e;">2</div>
<div class="t" style="left:365.75px;top:404.89px;font-size:11.6px;transform:scaleX(0.9050);transform-origin:left 50%;color:#1e1e1e;">MotoProfil</div>
<div class="t" style="left:542.57px;top:404.89px;font-size:11.6px;transform:scaleX(0.9200);transform-origin:right 50%;color:#1e1e1e;">2250,00</div>
<div class="t" style="left:637.42px;top:404.89px;font-size:11.6px;transform:scaleX(0.9200);transform-origin:right 50%;color:#1e1e1e;">0,00</div>
<div class="a" style="left:740.2px;top:403.51px;width:12.3px;height:15px;background:#ffffff"></div>
<svg class="a" style="left:740px;top:404.31px" width="12" height="12" viewBox="0 0 12 12"><path d="M5.5 6.2L10.6 1.3" stroke="#4a4a00" stroke-width="3" stroke-linecap="round"/><path d="M5.5 6.2L10.6 1.3" stroke="#ecec30" stroke-width="1.4" stroke-linecap="round"/><ellipse cx="3.9" cy="7.9" rx="3.3" ry="3" fill="#ecec30" stroke="#4a4a00" stroke-width="0.9"/><circle cx="2.8" cy="8.8" r="0.9" fill="#303000"/></svg>
<div class="a" style="left:171px;top:420.68px;width:8.5px;height:10px;background:#ffffff;border:1px solid #909090;border-top-color:#707070;border-left-color:#707070"></div>
<div class="t" style="left:241.55px;top:420.56px;font-size:11.6px;color:#1e1e1e;">5</div>
<div class="t" style="left:253.00px;top:420.56px;font-size:11.6px;transform:scaleX(0.9180);transform-origin:left 50%;color:#1e1e1e;">13.08.2013</div>
<div class="t" style="left:353.05px;top:420.56px;font-size:11.6px;color:#1e1e1e;">2</div>
<div class="t" style="left:365.75px;top:420.56px;font-size:11.6px;transform:scaleX(0.9050);transform-origin:left 50%;color:#1e1e1e;">MotoProfil</div>
<div class="t" style="left:545.16px;top:420.56px;font-size:11.6px;transform:scaleX(0.9200);transform-origin:right 50%;color:#1e1e1e;">-852,00</div>
<div class="t" style="left:637.42px;top:420.56px;font-size:11.6px;transform:scaleX(0.9200);transform-origin:right 50%;color:#1e1e1e;">0,00</div>
<div class="t" style="left:666.25px;top:420.56px;font-size:11.6px;transform:scaleX(0.9200);transform-origin:left 50%;color:#1e1e1e;">12584654</div>
<div class="a" style="left:740.2px;top:419.18px;width:12.3px;height:15px;background:#ffffff"></div>
<svg class="a" style="left:740px;top:419.98px" width="12" height="12" viewBox="0 0 12 12"><path d="M5.5 6.2L10.6 1.3" stroke="#4a4a00" stroke-width="3" stroke-linecap="round"/><path d="M5.5 6.2L10.6 1.3" stroke="#ecec30" stroke-width="1.4" stroke-linecap="round"/><ellipse cx="3.9" cy="7.9" rx="3.3" ry="3" fill="#ecec30" stroke="#4a4a00" stroke-width="0.9"/><circle cx="2.8" cy="8.8" r="0.9" fill="#303000"/></svg>
<div class="a" style="left:171px;top:436.35px;width:8.5px;height:10px;background:#ffffff;border:1px solid #909090;border-top-color:#707070;border-left-color:#707070"></div>
<div class="t" style="left:241.55px;top:436.23px;font-size:11.6px;color:#1e1e1e;">6</div>
<div class="t" style="left:253.00px;top:436.23px;font-size:11.6px;transform:scaleX(0.9180);transform-origin:left 50%;color:#1e1e1e;">15.08.2013</div>
<div class="t" style="left:353.05px;top:436.23px;font-size:11.6px;color:#1e1e1e;">3</div>
<div class="t" style="left:365.75px;top:436.23px;font-size:11.6px;transform:scaleX(0.9050);transform-origin:left 50%;color:#1e1e1e;">Auto Partner</div>
<div class="t" style="left:545.16px;top:436.23px;font-size:11.6px;transform:scaleX(0.9200);transform-origin:right 50%;color:#1e1e1e;">-451,00</div>
<div class="t" style="left:637.42px;top:436.23px;font-size:11.6px;transform:scaleX(0.9200);transform-origin:right 50%;color:#1e1e1e;">0,00</div>
<div class="t" style="left:666.25px;top:436.23px;font-size:11.6px;transform:scaleX(0.9200);transform-origin:left 50%;color:#1e1e1e;">1258965</div>
<div class="a" style="left:171px;top:452.02px;width:8.5px;height:10px;background:#ffffff;border:1px solid #909090;border-top-color:#707070;border-left-color:#707070"></div>
<div class="t" style="left:241.55px;top:451.90px;font-size:11.6px;color:#1e1e1e;">7</div>
<div class="t" style="left:253.00px;top:451.90px;font-size:11.6px;transform:scaleX(0.9180);transform-origin:left 50%;color:#1e1e1e;">15.08.2013</div>
<div class="t" style="left:353.05px;top:451.90px;font-size:11.6px;color:#1e1e1e;">2</div>
<div class="t" style="left:365.75px;top:451.90px;font-size:11.6px;transform:scaleX(0.9050);transform-origin:left 50%;color:#1e1e1e;">MotoProfil</div>
<div class="t" style="left:538.70px;top:451.90px;font-size:11.6px;transform:scaleX(0.9200);transform-origin:right 50%;color:#1e1e1e;">-1252,00</div>
<div class="t" style="left:637.42px;top:451.90px;font-size:11.6px;transform:scaleX(0.9200);transform-origin:right 50%;color:#1e1e1e;">0,00</div>
<div class="t" style="left:666.25px;top:451.90px;font-size:11.6px;transform:scaleX(0.9200);transform-origin:left 50%;color:#1e1e1e;">125998756</div>
<div class="a" style="left:169.5px;top:451px;width:598px;height:14.5px;border:2px solid #3399ff"></div>
<svg class="a" style="left:163px;top:454.5px" width="5" height="8" viewBox="0 0 5 8"><path d="M0.5 0.5 L4.5 4 L0.5 7.5Z" fill="#101010"/></svg>
<div class="a" style="left:768px;top:341px;width:14px;height:151px;background:#e8e8e8"></div>
<div class="a" style="left:768px;top:341px;width:13.5px;height:12.5px;background:#f4f4f4;border-right:1px solid #a0a0a0;border-bottom:1.5px solid #b8b8b8"></div>
<svg class="a" style="left:771.8px;top:344.8px" width="6" height="4" viewBox="0 0 6 4"><path d="M0 3.6 L3 0.3 L6 3.6Z" fill="#101010"/></svg>
<div class="a" style="left:768px;top:354px;width:14px;height:40px;background:#fafafa;border:1px solid #dcdcdc"></div>
<div class="a" style="left:768px;top:472px;width:14px;height:8px;background:#fafafa;border:1px solid #dcdcdc"></div>
<div class="a" style="left:768px;top:481px;width:14px;height:11px;background:#f4f4f4;border:1px solid #d0d0d0"></div>
<svg class="a" style="left:771px;top:484px" width="8" height="5" viewBox="0 0 8 5"><path d="M0 0.5 L4 4.5 L8 0.5Z" fill="#101010"/></svg>
<div class="a btn" style="left:786px;top:422.5px;width:58.5px;height:15.5px;"></div>
<div class="t" style="left:789.56px;top:425.14px;font-size:12px;transform:scaleX(0.8955);transform-origin:center 50%;color:#1e1e1e;">úč.doklad</div>
<div class="a btn" style="left:846px;top:422.5px;width:24.5px;height:15.5px;"></div>
<svg class="a" style="left:848px;top:424.5px" width="13" height="12" viewBox="0 0 13 12"><path d="M3 1 H10 V5 H3Z" fill="#fff" stroke="#303030"/><path d="M1 5 H12 V11 H1Z" fill="#606060" stroke="#303030"/><circle cx="10" cy="8.5" r="1" fill="#20c020"/></svg>
<div class="t" style="left:862.00px;top:426.80px;font-size:8.5px;color:#202020;">Ú</div>
<div class="a btn" style="left:786px;top:440.5px;width:84.5px;height:15.5px;"></div>
<div class="t" style="left:786.89px;top:443.14px;font-size:12px;transform:scaleX(0.9188);transform-origin:center 50%;color:#1e1e1e;">účtuj hromadně</div>
<div class="t" style="left:801.39px;top:465.47px;font-size:11.5px;transform:scaleX(0.8330);transform-origin:center 50%;color:#1e1e1e;">zpracoval</div>
<div class="a inp" style="left:786px;top:478px;width:85px;height:15.5px;background:#d4d2cc"></div>
<div class="t" style="left:795.00px;top:480.97px;font-size:11.5px;color:#1e1e1e;">2</div>
<div class="t" style="left:806.25px;top:480.97px;font-size:11.5px;transform:scaleX(0.8378);transform-origin:left 50%;color:#1e1e1e;">Laďa</div></body></html>
